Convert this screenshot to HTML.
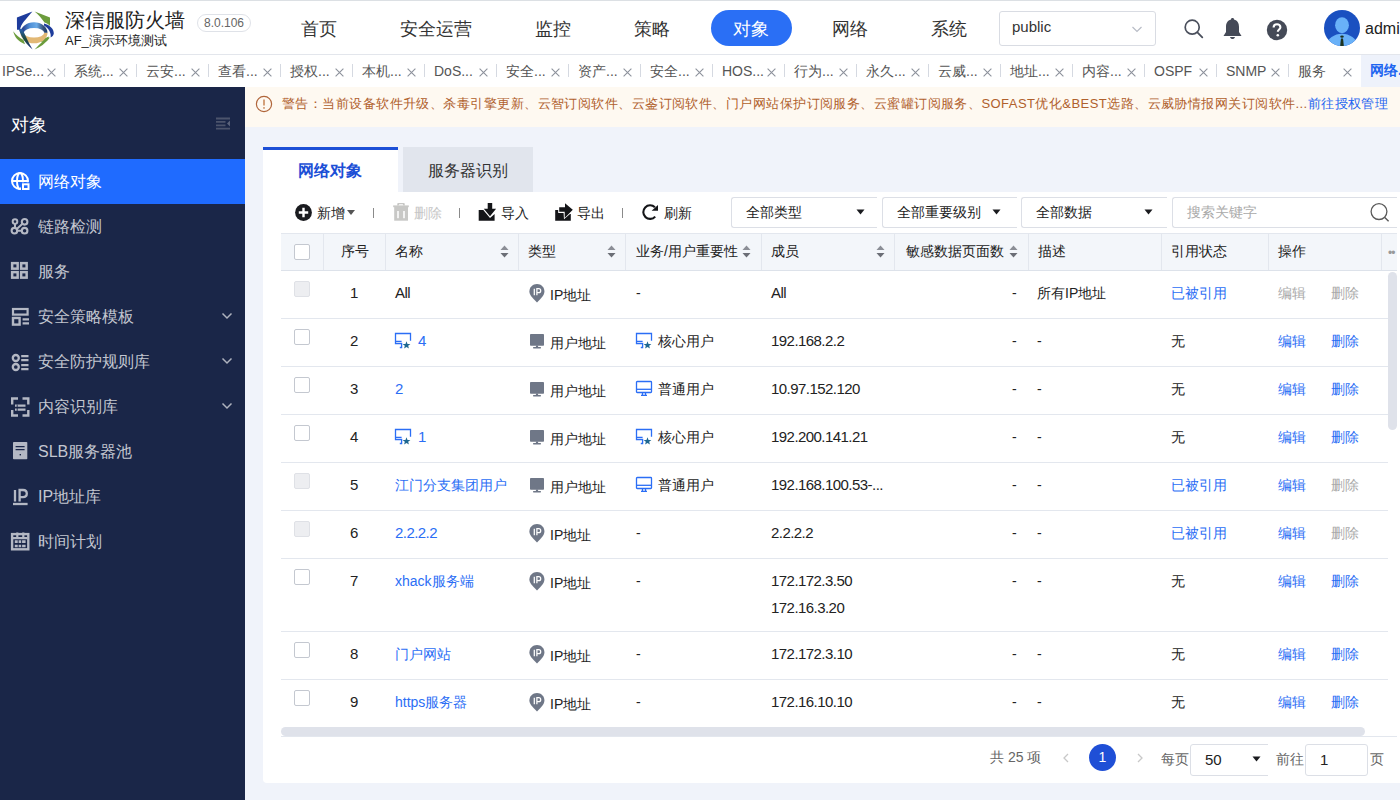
<!DOCTYPE html>
<html><head><meta charset="utf-8">
<style>
*{box-sizing:border-box;margin:0;padding:0}
html,body{width:1400px;height:800px;overflow:hidden;background:#f0f3fa;font-family:"Liberation Sans",sans-serif;color:#333}
.abs{position:absolute}
#hdr{position:absolute;left:0;top:0;width:1400px;height:55px;background:#fff;border-top:1px solid #dce0e4;border-bottom:1px solid #e3e6ec}
#tabs{position:absolute;left:0;top:55px;width:1400px;height:32px;background:#fff;overflow:hidden}
#side{position:absolute;left:0;top:87px;width:245px;height:713px;background:#1a2648}
#main{position:absolute;left:245px;top:87px;width:1155px;height:713px;background:#f0f3fa;overflow:hidden}
.nav{position:absolute;top:16px;font-size:18px;color:#333;line-height:22px;white-space:nowrap}
.tab{position:absolute;top:0;height:32px;width:72px;font-size:14px;color:#555;line-height:31px;white-space:nowrap}
.tab .sep{position:absolute;left:0;top:9px;width:1px;height:13px;background:#d5d9e1}
.tab .t{position:absolute;left:10px;top:1px}
.tab .x{position:absolute;left:55px;top:13px}
.mi{position:absolute;left:0;width:245px;height:45px;font-size:16px;color:#c3c6d0;line-height:45px}
.mi .tx{position:absolute;left:38px;top:0}
.mi svg{position:absolute;left:11px;top:13px}
.mi .chev{position:absolute;left:221px;top:18px}
.tbt{top:203px;font-size:14px;line-height:20px;color:#222;white-space:nowrap}
.sel{top:197px;height:31px;border:1px solid #dcdfe6;border-radius:3px;background:#fff;font-size:14px;line-height:29px;color:#222;white-space:nowrap}
.cb{width:16px;height:16px;border:1px solid #c4c8d0;border-radius:2px;background:#fff}
.cb.dis{background:#edeef1;border-color:#dfe1e6}
.th{top:240px;font-size:14px;line-height:22px;color:#222;white-space:nowrap}
.td{font-size:14px;line-height:22px;color:#222;white-space:nowrap}
.td.num{font-size:15px;letter-spacing:-0.55px}
</style></head><body>
<div id="hdr">
<div id="hdrin" style="position:absolute;left:0;top:1px;width:1400px;height:52px">
<svg class="abs" style="left:0;top:0" width="60" height="54" viewBox="0 0 60 54">
<defs><linearGradient id="bandg" x1="0" x2="1" y1="0" y2="0"><stop offset="0" stop-color="#1b2a7a"/><stop offset="0.35" stop-color="#4f8fd6"/><stop offset="0.6" stop-color="#6aaae6"/><stop offset="0.85" stop-color="#35507a"/><stop offset="1" stop-color="#1a3a6a"/></linearGradient>
<linearGradient id="diag" x1="0" x2="0" y1="0" y2="1"><stop offset="0" stop-color="#2a5fb0"/><stop offset="0.5" stop-color="#1f4a3a"/><stop offset="1" stop-color="#1c2f8a"/></linearGradient></defs>
<path d="M16.9 15.4 L32.4 9.4 L23.5 20 C21.5 22.5 20.5 25 20 27.8 L17 27.8 Z" fill="#1e3c9c"/>
<path d="M34.6 9.4 L50 15.4 L50 24 C48.5 22.5 46.5 21.2 44.5 20.6 C42 16.5 38.5 12.5 34.6 9.4 Z" fill="#6c9c3c"/>
<path d="M13.3 29.3 C14.2 34.5 18 39.5 25 42.3 L23.5 38 C19.5 36 16 33 13.3 29.3 Z" fill="#6c9c3c"/>
<path d="M34.6 47.4 C40 45 45.5 41.5 49.8 35.4 L47.5 35.6 C44 38 40 42 34.6 47.4 Z" fill="#6c9c3c"/>
<path d="M38.5 37.8 C42 37 46 36 49 34.5 L47 39 C44 40 41 40.5 38.5 37.8 Z" fill="#6c9c3c"/>
<path d="M20.5 30.8 A13.5 10.5 0 0 0 47.5 30.8 Z" fill="#e2b874"/>
<path d="M20.5 30.8 A13.5 10.5 0 0 1 47.5 30.8 Z" fill="url(#bandg)"/>
<ellipse cx="34" cy="30.8" rx="10.2" ry="4.8" fill="#fff"/>
<path d="M44 21.4 C50 23 54 27 53.8 31.5 C53.6 33.2 52.2 34.8 50.6 35.6 C51.4 31.5 49 26.5 44 23.6 Z" fill="#1e3c9c"/>
<path d="M18.6 27 L22.2 26.8 C25 33 28.5 40.5 32.6 47.6 C28 43.5 24 39 21.5 34 Z" fill="url(#diag)"/>
</svg>
<div class="abs" style="left:65px;top:5px;font-size:20px;line-height:26px;color:#222;white-space:nowrap">深信服防火墙</div>
<div class="abs" style="left:65px;top:30px;font-size:13px;line-height:18px;color:#222;white-space:nowrap">AF_演示环境测试</div>
<div class="abs" style="left:197px;top:12px;width:54px;height:18px;border:1px solid #dfe2e8;border-radius:9px;font-size:12px;line-height:16px;color:#666;text-align:center">8.0.106</div>
<div class="nav" style="left:301px">首页</div>
<div class="nav" style="left:400px">安全运营</div>
<div class="nav" style="left:535px">监控</div>
<div class="nav" style="left:634px">策略</div>
<div class="abs" style="left:711px;top:8px;width:81px;height:36px;border-radius:18px;background:#2a6ff5"></div>
<div class="nav" style="left:733px;color:#fff">对象</div>
<div class="nav" style="left:832px">网络</div>
<div class="nav" style="left:931px">系统</div>
<div class="abs" style="left:999px;top:9px;width:157px;height:35px;border:1px solid #d9dce3;border-radius:3px;font-size:15px;line-height:29px;color:#333;padding-left:12px">public</div>
<svg class="abs" style="left:1131px;top:23px" width="12" height="8" viewBox="0 0 12 8"><path d="M1.5 2 L6 6.5 L10.5 2" fill="none" stroke="#b8bcc6" stroke-width="1.2"/></svg>
<svg class="abs" style="left:1182px;top:14px" width="24" height="24" viewBox="0 0 24 24"><circle cx="10.2" cy="11.2" r="7" fill="none" stroke="#4a4f5c" stroke-width="1.7"/><path d="M15.4 16.4 L20.3 21.3" stroke="#4a4f5c" stroke-width="1.8" stroke-linecap="round"/></svg>
<svg class="abs" style="left:1222px;top:14px" width="21" height="24" viewBox="0 0 21 24"><path d="M10.5 2 C11.5 2 12 2.6 12 3.4 C15.5 4.3 17 7 17 11 L17 16 L19.5 20 L1.5 20 L4 16 L4 11 C4 7 5.5 4.3 9 3.4 C9 2.6 9.5 2 10.5 2 Z" fill="#454a57"/><path d="M8 21 C8.5 22.5 9.5 23 10.5 23 C11.5 23 12.5 22.5 13 21 Z" fill="#454a57"/></svg>
<svg class="abs" style="left:1266px;top:17px" width="22" height="22" viewBox="0 0 22 22"><circle cx="11" cy="11" r="10.2" fill="#454a57"/><path d="M7.6 8.4 C7.6 6.3 9.1 5.2 11 5.2 C12.9 5.2 14.4 6.4 14.4 8.2 C14.4 10.4 11.8 10.6 11.8 12.8" fill="none" stroke="#fff" stroke-width="2.1"/><circle cx="11.8" cy="16.2" r="1.3" fill="#fff"/></svg>
<svg class="abs" style="left:1323px;top:7px" width="38" height="38" viewBox="0 0 38 38"><defs><clipPath id="av"><circle cx="19" cy="19" r="18"/></clipPath></defs><circle cx="19" cy="19" r="18" fill="#1a50c0"/><g clip-path="url(#av)"><ellipse cx="19" cy="16.2" rx="6.9" ry="8" fill="#69b1f8"/><path d="M2 38 C4 30 11 24.8 19 24.8 C27 24.8 34 30 36 38 Z" fill="#69b1f8"/><ellipse cx="19" cy="27.6" rx="1.8" ry="1.2" fill="#1d3320"/><path d="M18 29.5 H20 L21 38 H17 Z" fill="#1d3320"/></g></svg>
<div class="abs" style="left:1365px;top:17px;font-size:16px;line-height:20px;color:#222">admin</div>
</div>
</div>
<div id="tabs">
<div class="tab" style="left:-8px"><span class="t">IPSe...</span><svg class="x" width="9" height="9" viewBox="0 0 9 9"><path d="M0.6 0.6 L8.4 8.4 M8.4 0.6 L0.6 8.4" stroke="#8d929c" stroke-width="1.1"/></svg></div>
<div class="tab" style="left:64px"><div class="sep"></div><span class="t">系统...</span><svg class="x" width="9" height="9" viewBox="0 0 9 9"><path d="M0.6 0.6 L8.4 8.4 M8.4 0.6 L0.6 8.4" stroke="#8d929c" stroke-width="1.1"/></svg></div>
<div class="tab" style="left:136px"><div class="sep"></div><span class="t">云安...</span><svg class="x" width="9" height="9" viewBox="0 0 9 9"><path d="M0.6 0.6 L8.4 8.4 M8.4 0.6 L0.6 8.4" stroke="#8d929c" stroke-width="1.1"/></svg></div>
<div class="tab" style="left:208px"><div class="sep"></div><span class="t">查看...</span><svg class="x" width="9" height="9" viewBox="0 0 9 9"><path d="M0.6 0.6 L8.4 8.4 M8.4 0.6 L0.6 8.4" stroke="#8d929c" stroke-width="1.1"/></svg></div>
<div class="tab" style="left:280px"><div class="sep"></div><span class="t">授权...</span><svg class="x" width="9" height="9" viewBox="0 0 9 9"><path d="M0.6 0.6 L8.4 8.4 M8.4 0.6 L0.6 8.4" stroke="#8d929c" stroke-width="1.1"/></svg></div>
<div class="tab" style="left:352px"><div class="sep"></div><span class="t">本机...</span><svg class="x" width="9" height="9" viewBox="0 0 9 9"><path d="M0.6 0.6 L8.4 8.4 M8.4 0.6 L0.6 8.4" stroke="#8d929c" stroke-width="1.1"/></svg></div>
<div class="tab" style="left:424px"><div class="sep"></div><span class="t">DoS...</span><svg class="x" width="9" height="9" viewBox="0 0 9 9"><path d="M0.6 0.6 L8.4 8.4 M8.4 0.6 L0.6 8.4" stroke="#8d929c" stroke-width="1.1"/></svg></div>
<div class="tab" style="left:496px"><div class="sep"></div><span class="t">安全...</span><svg class="x" width="9" height="9" viewBox="0 0 9 9"><path d="M0.6 0.6 L8.4 8.4 M8.4 0.6 L0.6 8.4" stroke="#8d929c" stroke-width="1.1"/></svg></div>
<div class="tab" style="left:568px"><div class="sep"></div><span class="t">资产...</span><svg class="x" width="9" height="9" viewBox="0 0 9 9"><path d="M0.6 0.6 L8.4 8.4 M8.4 0.6 L0.6 8.4" stroke="#8d929c" stroke-width="1.1"/></svg></div>
<div class="tab" style="left:640px"><div class="sep"></div><span class="t">安全...</span><svg class="x" width="9" height="9" viewBox="0 0 9 9"><path d="M0.6 0.6 L8.4 8.4 M8.4 0.6 L0.6 8.4" stroke="#8d929c" stroke-width="1.1"/></svg></div>
<div class="tab" style="left:712px"><div class="sep"></div><span class="t">HOS...</span><svg class="x" width="9" height="9" viewBox="0 0 9 9"><path d="M0.6 0.6 L8.4 8.4 M8.4 0.6 L0.6 8.4" stroke="#8d929c" stroke-width="1.1"/></svg></div>
<div class="tab" style="left:784px"><div class="sep"></div><span class="t">行为...</span><svg class="x" width="9" height="9" viewBox="0 0 9 9"><path d="M0.6 0.6 L8.4 8.4 M8.4 0.6 L0.6 8.4" stroke="#8d929c" stroke-width="1.1"/></svg></div>
<div class="tab" style="left:856px"><div class="sep"></div><span class="t">永久...</span><svg class="x" width="9" height="9" viewBox="0 0 9 9"><path d="M0.6 0.6 L8.4 8.4 M8.4 0.6 L0.6 8.4" stroke="#8d929c" stroke-width="1.1"/></svg></div>
<div class="tab" style="left:928px"><div class="sep"></div><span class="t">云威...</span><svg class="x" width="9" height="9" viewBox="0 0 9 9"><path d="M0.6 0.6 L8.4 8.4 M8.4 0.6 L0.6 8.4" stroke="#8d929c" stroke-width="1.1"/></svg></div>
<div class="tab" style="left:1000px"><div class="sep"></div><span class="t">地址...</span><svg class="x" width="9" height="9" viewBox="0 0 9 9"><path d="M0.6 0.6 L8.4 8.4 M8.4 0.6 L0.6 8.4" stroke="#8d929c" stroke-width="1.1"/></svg></div>
<div class="tab" style="left:1072px"><div class="sep"></div><span class="t">内容...</span><svg class="x" width="9" height="9" viewBox="0 0 9 9"><path d="M0.6 0.6 L8.4 8.4 M8.4 0.6 L0.6 8.4" stroke="#8d929c" stroke-width="1.1"/></svg></div>
<div class="tab" style="left:1144px"><div class="sep"></div><span class="t">OSPF</span><svg class="x" width="9" height="9" viewBox="0 0 9 9"><path d="M0.6 0.6 L8.4 8.4 M8.4 0.6 L0.6 8.4" stroke="#8d929c" stroke-width="1.1"/></svg></div>
<div class="tab" style="left:1216px"><div class="sep"></div><span class="t">SNMP</span><svg class="x" width="9" height="9" viewBox="0 0 9 9"><path d="M0.6 0.6 L8.4 8.4 M8.4 0.6 L0.6 8.4" stroke="#8d929c" stroke-width="1.1"/></svg></div>
<div class="tab" style="left:1288px"><div class="sep"></div><span class="t">服务</span><svg class="x" width="9" height="9" viewBox="0 0 9 9"><path d="M0.6 0.6 L8.4 8.4 M8.4 0.6 L0.6 8.4" stroke="#8d929c" stroke-width="1.1"/></svg></div>
<div class="abs" style="left:1361px;top:0;width:40px;height:32px;background:#eef2fb"></div><div class="abs" style="left:1370px;top:0;font-size:14px;line-height:31px;color:#1f66f0;font-weight:bold;white-space:nowrap">网络...</div>
</div>
<div id="side">
<div class="abs" style="left:11px;top:26px;font-size:18px;line-height:24px;color:#fff">对象</div>
<svg class="abs" style="left:215px;top:30px" width="16" height="13" viewBox="0 0 16 13"><path d="M1 1.5 H15 M1 4.9 H10.5 M1 8.3 H10.5 M1 11.6 H15" stroke="#4c546c" stroke-width="1.8"/><path d="M15 3.5 V9.6 L12 6.55 Z" fill="#5a627a"/></svg>
<div class="mi" style="top:72px;background:#1f6bff;color:#fff;"><svg width="24" height="24" viewBox="0 0 24 24" style="left:8px;top:10px"><circle cx="12" cy="12" r="8" fill="none" stroke="#fff" stroke-width="2"/><path d="M4 12 H20" stroke="#fff" stroke-width="2"/><ellipse cx="12" cy="12" rx="3" ry="8" fill="none" stroke="#fff" stroke-width="1.9"/><rect x="13" y="13.3" width="9.5" height="9" fill="#1f6bff"/><rect x="15" y="15.3" width="5.5" height="4.7" fill="none" stroke="#fff" stroke-width="2"/></svg><span class="tx">网络对象</span></div>
<div class="mi" style="top:117px;"><svg width="24" height="24" viewBox="0 0 24 24" style="left:8px;top:10px"><path d="M7 8 V16.7 L16.6 7.8 M6.5 16.7 H16.6" fill="none" stroke="#b4b8c4" stroke-width="2"/><circle cx="7" cy="7.6" r="2.3" fill="#1a2648" stroke="#b4b8c4" stroke-width="2"/><circle cx="16.6" cy="7.8" r="2.8" fill="#1a2648" stroke="#b4b8c4" stroke-width="2.1"/><circle cx="6.4" cy="16.7" r="2.8" fill="#1a2648" stroke="#b4b8c4" stroke-width="2.1"/><circle cx="16.6" cy="16.7" r="2.8" fill="#1a2648" stroke="#b4b8c4" stroke-width="2.1"/></svg><span class="tx">链路检测</span></div>
<div class="mi" style="top:162px;"><svg width="24" height="24" viewBox="0 0 24 24" style="left:8px;top:10px"><rect x="4.15" y="4.15" width="5.5" height="5.5" fill="none" stroke="#b4b8c4" stroke-width="2.5"/><rect x="13.15" y="4.15" width="5.5" height="5.5" fill="none" stroke="#b4b8c4" stroke-width="2.5"/><rect x="4.15" y="13.15" width="5.5" height="5.5" fill="none" stroke="#b4b8c4" stroke-width="2.5"/><rect x="13.15" y="13.15" width="5.5" height="5.5" fill="none" stroke="#b4b8c4" stroke-width="2.5"/></svg><span class="tx">服务</span></div>
<div class="mi" style="top:207px;"><svg width="24" height="24" viewBox="0 0 24 24" style="left:8px;top:10px"><rect x="5" y="5" width="14.6" height="5.6" fill="none" stroke="#b4b8c4" stroke-width="2.2"/><rect x="5" y="14" width="6.6" height="6.6" fill="none" stroke="#b4b8c4" stroke-width="2.4"/><path d="M14.6 15.3 H21 M14.6 19.3 H21" stroke="#b4b8c4" stroke-width="2.3"/></svg><span class="tx">安全策略模板</span><svg class="chev" width="12" height="8" viewBox="0 0 12 8"><path d="M1.5 1.5 L6 6 L10.5 1.5" fill="none" stroke="#aeb2be" stroke-width="1.5"/></svg></div>
<div class="mi" style="top:252px;"><svg width="24" height="24" viewBox="0 0 24 24" style="left:8px;top:10px"><circle cx="7.8" cy="9" r="3" fill="none" stroke="#b4b8c4" stroke-width="2.3"/><circle cx="7.8" cy="18" r="3" fill="none" stroke="#b4b8c4" stroke-width="2.3"/><path d="M13.2 7.2 H20.5 M13.2 11.2 H20.5 M13.2 16.2 H20.5 M13.2 20.2 H20.5" stroke="#b4b8c4" stroke-width="2.2"/></svg><span class="tx">安全防护规则库</span><svg class="chev" width="12" height="8" viewBox="0 0 12 8"><path d="M1.5 1.5 L6 6 L10.5 1.5" fill="none" stroke="#aeb2be" stroke-width="1.5"/></svg></div>
<div class="mi" style="top:297px;"><svg width="24" height="24" viewBox="0 0 24 24" style="left:8px;top:10px"><path d="M10 4.5 H4.2 V10.5 M14.5 4.5 H20.3 V10.5 M4.2 16 V21.5 H10 M20.3 16 V21.5 H14.5" fill="none" stroke="#b4b8c4" stroke-width="2.4"/><path d="M7 11.6 H17.5 M7 15.6 H17.5" stroke="#b4b8c4" stroke-width="2.2"/><path d="M9.2 10.5 V17" stroke="#1a2648" stroke-width="0.9"/></svg><span class="tx">内容识别库</span><svg class="chev" width="12" height="8" viewBox="0 0 12 8"><path d="M1.5 1.5 L6 6 L10.5 1.5" fill="none" stroke="#aeb2be" stroke-width="1.5"/></svg></div>
<div class="mi" style="top:342px;"><svg width="24" height="24" viewBox="0 0 24 24" style="left:8px;top:10px"><rect x="5" y="3" width="14.3" height="17.2" fill="#b4b8c4" rx="0.8"/><path d="M7.6 7.6 H16.6 M7.6 10.6 H16.6" stroke="#1a2648" stroke-width="1.3"/><rect x="11.6" y="15" width="1.4" height="1.4" fill="#1a2648"/></svg><span class="tx">SLB服务器池</span></div>
<div class="mi" style="top:387px;"><svg width="24" height="24" viewBox="0 0 24 24" style="left:8px;top:10px"><path d="M7 6 V17.6 M11.6 17.6 V6 H15 C17.6 6 18.8 7.4 18.8 9.6 C18.8 11.8 17.6 13.2 15 13.2 H11.6" fill="none" stroke="#b4b8c4" stroke-width="2.3"/><path d="M5 20 H19.6" stroke="#b4b8c4" stroke-width="2.3"/></svg><span class="tx">IP地址库</span></div>
<div class="mi" style="top:432px;"><svg width="24" height="24" viewBox="0 0 24 24" style="left:8px;top:10px"><rect x="4.1" y="5.1" width="16.2" height="15.2" fill="none" stroke="#b4b8c4" stroke-width="2.4"/><path d="M5 9.2 H19.5 M9.3 3.6 V8.8 M15.3 3.6 V8.8" stroke="#b4b8c4" stroke-width="2.2"/><path d="M6.8 12.6 H17.6 M6.8 17 H17.6" stroke="#b4b8c4" stroke-width="2.6"/><path d="M10.2 11 V18.6 M13.6 11 V18.6" stroke="#1a2648" stroke-width="0.9"/></svg><span class="tx">时间计划</span></div>
</div>
<div id="main"></div>
<div class="abs" style="left:245px;top:87px;width:1155px;height:40px;background:#fef9f1"></div>
<svg class="abs" style="left:255px;top:95px" width="18" height="18" viewBox="0 0 18 18"><circle cx="9" cy="9" r="7.6" fill="none" stroke="#b0653a" stroke-width="1.2"/><path d="M9 4.6 V10.4" stroke="#c98a5c" stroke-width="1.6"/><circle cx="9" cy="12.9" r="0.9" fill="#c98a5c"/></svg>
<div class="abs warn" style="left:282px;top:95px;font-size:13px;line-height:18px;color:#b0602c;white-space:nowrap;letter-spacing:0.45px">警告：当前设备软件升级、杀毒引擎更新、云智订阅软件、云鉴订阅软件、门户网站保护订阅服务、云蜜罐订阅服务、SOFAST优化&amp;BEST选路、云威胁情报网关订阅软件...<span style="color:#1f66f0">前往授权管理</span></div>
<div class="abs" style="left:263px;top:147px;width:135px;height:45px;background:#fff;border-top:3px solid #1c4fd6"></div>
<div class="abs" style="left:298px;top:160px;font-size:16px;line-height:22px;color:#1c4fd6;font-weight:bold;white-space:nowrap">网络对象</div>
<div class="abs" style="left:403px;top:147px;width:130px;height:45px;background:#e1e5ed"></div>
<div class="abs" style="left:428px;top:160px;font-size:16px;line-height:22px;color:#333;white-space:nowrap">服务器识别</div>
<div class="abs" style="left:263px;top:192px;width:1160px;height:591px;background:#fff;border-radius:0 0 4px 4px"></div>
<!--TOOLBAR-->
<svg class="abs" style="left:294px;top:203px" width="19" height="19" viewBox="0 0 19 19"><circle cx="9.5" cy="9.5" r="8.4" fill="#1a1b1f"/><path d="M9.5 4.8 V14.2 M4.8 9.5 H14.2" stroke="#fff" stroke-width="2.4"/></svg>
<div class="abs tbt" style="left:317px">新增</div>
<svg class="abs" style="left:346px;top:209px" width="10" height="7" viewBox="0 0 10 7"><path d="M1 1 H9 L5 6 Z" fill="#555"/></svg>
<div class="abs" style="left:373px;top:208px;width:1px;height:10px;background:#8a8a8a"></div>
<svg class="abs" style="left:390px;top:200px" width="24" height="24" viewBox="0 0 24 24"><path d="M7 5.6 L7.6 3 H14.4 L15 5.6 H13.2 L12.8 4.2 H9.2 L8.8 5.6 Z" fill="#c8c8c6"/><rect x="3.2" y="5.4" width="15.6" height="1.8" fill="#c8c8c6"/><rect x="4.2" y="7" width="13.8" height="13.7" fill="#c8c8c6"/><rect x="7" y="11" width="2" height="7.2" fill="#f2f2f2"/><rect x="13" y="11" width="2" height="7.2" fill="#f2f2f2"/></svg>
<div class="abs tbt" style="left:414px;color:#c6c6c6">删除</div>
<div class="abs" style="left:459px;top:208px;width:1px;height:10px;background:#8a8a8a"></div>
<svg class="abs" style="left:476px;top:200px" width="24" height="24" viewBox="0 0 24 24"><path d="M2.7 10 H7.3 L14 17.9 L18.6 13.9 V20.7 H2.7 Z" fill="#141518"/><path d="M11.7 3 H16.2 V8.7 H20.1 L14 16.3 L7.8 8.7 H11.7 Z" fill="#141518"/></svg>
<div class="abs tbt" style="left:501px">导入</div>
<svg class="abs" style="left:552px;top:200px" width="24" height="24" viewBox="0 0 24 24"><path d="M3.2 9.9 H6.2 V13 H11.6 L12 19.2 L18 13.9 H18.8 V20.7 H3.2 Z" fill="#141518"/><path d="M7.2 7.2 H13 V3.3 L20.8 9.8 L12.7 18 V11.7 H7.2 Z" fill="#141518"/></svg>
<div class="abs tbt" style="left:577px">导出</div>
<div class="abs" style="left:622px;top:208px;width:1px;height:10px;background:#8a8a8a"></div>
<svg class="abs" style="left:638px;top:200px" width="24" height="24" viewBox="0 0 24 24"><path d="M16.9 7.3 A6.8 6.8 0 1 0 17.2 16.6" fill="none" stroke="#141518" stroke-width="2.1"/><path d="M20 5 V10.8 H13.6 Z" fill="#141518"/></svg>
<div class="abs tbt" style="left:664px">刷新</div>
<div class="abs sel" style="left:731px;width:146px;border-right:none;border-radius:3px 0 0 3px"><span style="position:absolute;left:14px;top:0">全部类型</span></div>
<svg class="abs" style="left:856px;top:209px" width="9" height="6" viewBox="0 0 9 6"><path d="M0.5 0.5 H8.5 L4.5 5.5 Z" fill="#1a1b1f"/></svg>
<div class="abs sel" style="left:882px;width:135px;border-right:none;border-radius:3px 0 0 3px"><span style="position:absolute;left:14px;top:0">全部重要级别</span></div>
<svg class="abs" style="left:992px;top:209px" width="9" height="6" viewBox="0 0 9 6"><path d="M0.5 0.5 H8.5 L4.5 5.5 Z" fill="#1a1b1f"/></svg>
<div class="abs sel" style="left:1021px;width:146px;border-right:none;border-radius:3px 0 0 3px"><span style="position:absolute;left:14px;top:0">全部数据</span></div>
<svg class="abs" style="left:1144px;top:209px" width="9" height="6" viewBox="0 0 9 6"><path d="M0.5 0.5 H8.5 L4.5 5.5 Z" fill="#1a1b1f"/></svg>
<div class="abs sel" style="left:1172px;width:225px;color:#aaa;border-right:none;border-radius:3px 0 0 3px"><span style="position:absolute;left:14px;top:0">搜索关键字</span></div>
<svg class="abs" style="left:1369px;top:202px" width="22" height="22" viewBox="0 0 22 22"><circle cx="10" cy="9.6" r="7.9" fill="none" stroke="#5a5a5a" stroke-width="1.3"/><path d="M15.8 15.4 L19.6 19.2" stroke="#5a5a5a" stroke-width="1.4"/></svg>
<!--/TOOLBAR-->
<!--TABLE-->
<div class="abs" style="left:281px;top:233px;width:1116px;height:38px;background:#f3f6fa;border-top:1px solid #e3e7ee;border-bottom:1px solid #dde2ea"></div>
<div class="abs" style="left:323px;top:233px;width:1px;height:37px;background:#e3e7ee"></div>
<div class="abs" style="left:385px;top:233px;width:1px;height:37px;background:#e3e7ee"></div>
<div class="abs" style="left:518px;top:233px;width:1px;height:37px;background:#e3e7ee"></div>
<div class="abs" style="left:625px;top:233px;width:1px;height:37px;background:#e3e7ee"></div>
<div class="abs" style="left:761px;top:233px;width:1px;height:37px;background:#e3e7ee"></div>
<div class="abs" style="left:894px;top:233px;width:1px;height:37px;background:#e3e7ee"></div>
<div class="abs" style="left:1028px;top:233px;width:1px;height:37px;background:#e3e7ee"></div>
<div class="abs" style="left:1161px;top:233px;width:1px;height:37px;background:#e3e7ee"></div>
<div class="abs" style="left:1268px;top:233px;width:1px;height:37px;background:#e3e7ee"></div>
<div class="abs" style="left:1381px;top:233px;width:1px;height:37px;background:#e3e7ee"></div>
<div class="abs cb" style="left:294px;top:244px"></div>
<div class="abs th" style="left:341px">序号</div>
<div class="abs th" style="left:395px">名称</div>
<div class="abs th" style="left:528px">类型</div>
<div class="abs th" style="left:636px">业务/用户重要性</div>
<div class="abs th" style="left:771px">成员</div>
<div class="abs th" style="left:906px">敏感数据页面数</div>
<div class="abs th" style="left:1038px">描述</div>
<div class="abs th" style="left:1171px">引用状态</div>
<div class="abs th" style="left:1278px">操作</div>
<div class="abs" style="left:500px;top:244px"><svg width="9" height="13" viewBox="0 0 9 13"><path d="M4.5 0.5 L8.5 5 H0.5 Z" fill="#8b8e96"/><path d="M4.5 12.5 L8.5 8 H0.5 Z" fill="#6b6e76"/></svg></div>
<div class="abs" style="left:607px;top:244px"><svg width="9" height="13" viewBox="0 0 9 13"><path d="M4.5 0.5 L8.5 5 H0.5 Z" fill="#8b8e96"/><path d="M4.5 12.5 L8.5 8 H0.5 Z" fill="#6b6e76"/></svg></div>
<div class="abs" style="left:742px;top:244px"><svg width="9" height="13" viewBox="0 0 9 13"><path d="M4.5 0.5 L8.5 5 H0.5 Z" fill="#8b8e96"/><path d="M4.5 12.5 L8.5 8 H0.5 Z" fill="#6b6e76"/></svg></div>
<div class="abs" style="left:876px;top:244px"><svg width="9" height="13" viewBox="0 0 9 13"><path d="M4.5 0.5 L8.5 5 H0.5 Z" fill="#8b8e96"/><path d="M4.5 12.5 L8.5 8 H0.5 Z" fill="#6b6e76"/></svg></div>
<div class="abs" style="left:1009px;top:244px"><svg width="9" height="13" viewBox="0 0 9 13"><path d="M4.5 0.5 L8.5 5 H0.5 Z" fill="#8b8e96"/><path d="M4.5 12.5 L8.5 8 H0.5 Z" fill="#6b6e76"/></svg></div>
<div class="abs" style="left:1388px;top:249px;font-size:12px;color:#999;line-height:8px;letter-spacing:-1px">••</div>
<div class="abs" style="left:281px;top:318px;width:1107px;height:1px;background:#e3e7ee"></div>
<div class="abs cb dis" style="left:294px;top:281px"></div>
<div class="abs td num" style="left:323px;width:62px;text-align:center;top:282px">1</div>
<div class="abs td num" style="left:395px;top:282px;color:#222">All</div>
<div class="abs" style="left:529px;top:284px"><svg width="16" height="20" viewBox="0 0 16 20"><path d="M8 0 C12.3 0 15.4 3.3 15.4 7.6 C15.4 11 12.8 14 8 18.4 C3.2 14 0.4 11 0.4 7.6 C0.4 3.3 3.7 0 8 0 Z" fill="#6f7787"/><path d="M5.3 4.7 V11.3 M7.9 11.3 V4.7 H9.7 C11 4.7 11.7 5.5 11.7 6.7 C11.7 7.9 11 8.7 9.7 8.7 H7.9" fill="none" stroke="#fff" stroke-width="1.25"/></svg></div>
<div class="abs td" style="left:550px;top:284px">IP地址</div>
<div class="abs td" style="left:636px;top:282px">-</div>
<div class="abs td num" style="left:771px;top:282px">All</div>
<div class="abs td" style="left:1012px;top:282px">-</div>
<div class="abs td" style="left:1037px;top:282px">所有IP地址</div>
<div class="abs td" style="left:1171px;top:282px;color:#2b6ef5">已被引用</div>
<div class="abs td" style="left:1278px;top:282px;color:#aaa">编辑</div>
<div class="abs td" style="left:1331px;top:282px;color:#aaa">删除</div>
<div class="abs" style="left:281px;top:366px;width:1107px;height:1px;background:#e3e7ee"></div>
<div class="abs cb" style="left:294px;top:329px"></div>
<div class="abs td num" style="left:323px;width:62px;text-align:center;top:330px">2</div>
<div class="abs" style="left:394px;top:331px"><svg width="18" height="18" viewBox="0 0 18 18"><path d="M16.5 9.8 V2.5 H1.5 V12.5 H7.6 V16.5 H5.8 M1.5 10.3 H7.6" fill="none" stroke="#2b6ef5" stroke-width="1.3"/><path d="M12.50 10.20 L13.53 12.88 L16.40 13.03 L14.16 14.84 L14.91 17.62 L12.50 16.05 L10.09 17.62 L10.84 14.84 L8.60 13.03 L11.47 12.88 Z" fill="#1d6791"/></svg></div>
<div class="abs td num" style="left:418px;top:330px;color:#2b6ef5">4</div>
<div class="abs" style="left:529px;top:333px"><svg width="16" height="16" viewBox="0 0 16 16"><rect x="1" y="1" width="14" height="11.8" rx="0.8" fill="#6f7787"/><rect x="6.9" y="12.5" width="2.2" height="2" fill="#6f7787"/><rect x="4" y="14.1" width="8" height="1.3" rx="0.6" fill="#6f7787"/></svg></div>
<div class="abs td" style="left:550px;top:332px">用户地址</div>
<div class="abs" style="left:635px;top:331px"><svg width="18" height="18" viewBox="0 0 18 18"><path d="M16.5 9.8 V2.5 H1.5 V12.5 H7.6 V16.5 H5.8 M1.5 10.3 H7.6" fill="none" stroke="#2b6ef5" stroke-width="1.3"/><path d="M12.50 10.20 L13.53 12.88 L16.40 13.03 L14.16 14.84 L14.91 17.62 L12.50 16.05 L10.09 17.62 L10.84 14.84 L8.60 13.03 L11.47 12.88 Z" fill="#1d6791"/></svg></div>
<div class="abs td" style="left:658px;top:330px">核心用户</div>
<div class="abs td num" style="left:771px;top:330px">192.168.2.2</div>
<div class="abs td" style="left:1012px;top:330px">-</div>
<div class="abs td" style="left:1037px;top:330px">-</div>
<div class="abs td" style="left:1171px;top:330px;color:#222">无</div>
<div class="abs td" style="left:1278px;top:330px;color:#2b6ef5">编辑</div>
<div class="abs td" style="left:1331px;top:330px;color:#2b6ef5">删除</div>
<div class="abs" style="left:281px;top:414px;width:1107px;height:1px;background:#e3e7ee"></div>
<div class="abs cb" style="left:294px;top:377px"></div>
<div class="abs td num" style="left:323px;width:62px;text-align:center;top:378px">3</div>
<div class="abs td num" style="left:395px;top:378px;color:#2b6ef5">2</div>
<div class="abs" style="left:529px;top:381px"><svg width="16" height="16" viewBox="0 0 16 16"><rect x="1" y="1" width="14" height="11.8" rx="0.8" fill="#6f7787"/><rect x="6.9" y="12.5" width="2.2" height="2" fill="#6f7787"/><rect x="4" y="14.1" width="8" height="1.3" rx="0.6" fill="#6f7787"/></svg></div>
<div class="abs td" style="left:550px;top:380px">用户地址</div>
<div class="abs" style="left:635px;top:379px"><svg width="18" height="18" viewBox="0 0 18 18"><rect x="1.5" y="2.5" width="15" height="11" rx="0.8" fill="none" stroke="#2b6ef5" stroke-width="1.3"/><path d="M1.5 10.3 H16.5" stroke="#2b6ef5" stroke-width="1.3"/><path d="M7.5 13.5 V16.4 M10.5 13.5 V16.4 M6 16.4 H12" stroke="#2b6ef5" stroke-width="1.3"/></svg></div>
<div class="abs td" style="left:658px;top:378px">普通用户</div>
<div class="abs td num" style="left:771px;top:378px">10.97.152.120</div>
<div class="abs td" style="left:1012px;top:378px">-</div>
<div class="abs td" style="left:1037px;top:378px">-</div>
<div class="abs td" style="left:1171px;top:378px;color:#222">无</div>
<div class="abs td" style="left:1278px;top:378px;color:#2b6ef5">编辑</div>
<div class="abs td" style="left:1331px;top:378px;color:#2b6ef5">删除</div>
<div class="abs" style="left:281px;top:462px;width:1107px;height:1px;background:#e3e7ee"></div>
<div class="abs cb" style="left:294px;top:425px"></div>
<div class="abs td num" style="left:323px;width:62px;text-align:center;top:426px">4</div>
<div class="abs" style="left:394px;top:427px"><svg width="18" height="18" viewBox="0 0 18 18"><path d="M16.5 9.8 V2.5 H1.5 V12.5 H7.6 V16.5 H5.8 M1.5 10.3 H7.6" fill="none" stroke="#2b6ef5" stroke-width="1.3"/><path d="M12.50 10.20 L13.53 12.88 L16.40 13.03 L14.16 14.84 L14.91 17.62 L12.50 16.05 L10.09 17.62 L10.84 14.84 L8.60 13.03 L11.47 12.88 Z" fill="#1d6791"/></svg></div>
<div class="abs td num" style="left:418px;top:426px;color:#2b6ef5">1</div>
<div class="abs" style="left:529px;top:429px"><svg width="16" height="16" viewBox="0 0 16 16"><rect x="1" y="1" width="14" height="11.8" rx="0.8" fill="#6f7787"/><rect x="6.9" y="12.5" width="2.2" height="2" fill="#6f7787"/><rect x="4" y="14.1" width="8" height="1.3" rx="0.6" fill="#6f7787"/></svg></div>
<div class="abs td" style="left:550px;top:428px">用户地址</div>
<div class="abs" style="left:635px;top:427px"><svg width="18" height="18" viewBox="0 0 18 18"><path d="M16.5 9.8 V2.5 H1.5 V12.5 H7.6 V16.5 H5.8 M1.5 10.3 H7.6" fill="none" stroke="#2b6ef5" stroke-width="1.3"/><path d="M12.50 10.20 L13.53 12.88 L16.40 13.03 L14.16 14.84 L14.91 17.62 L12.50 16.05 L10.09 17.62 L10.84 14.84 L8.60 13.03 L11.47 12.88 Z" fill="#1d6791"/></svg></div>
<div class="abs td" style="left:658px;top:426px">核心用户</div>
<div class="abs td num" style="left:771px;top:426px">192.200.141.21</div>
<div class="abs td" style="left:1012px;top:426px">-</div>
<div class="abs td" style="left:1037px;top:426px">-</div>
<div class="abs td" style="left:1171px;top:426px;color:#222">无</div>
<div class="abs td" style="left:1278px;top:426px;color:#2b6ef5">编辑</div>
<div class="abs td" style="left:1331px;top:426px;color:#2b6ef5">删除</div>
<div class="abs" style="left:281px;top:510px;width:1107px;height:1px;background:#e3e7ee"></div>
<div class="abs cb dis" style="left:294px;top:473px"></div>
<div class="abs td num" style="left:323px;width:62px;text-align:center;top:474px">5</div>
<div class="abs td" style="left:395px;top:474px;color:#2b6ef5">江门分支集团用户</div>
<div class="abs" style="left:529px;top:477px"><svg width="16" height="16" viewBox="0 0 16 16"><rect x="1" y="1" width="14" height="11.8" rx="0.8" fill="#6f7787"/><rect x="6.9" y="12.5" width="2.2" height="2" fill="#6f7787"/><rect x="4" y="14.1" width="8" height="1.3" rx="0.6" fill="#6f7787"/></svg></div>
<div class="abs td" style="left:550px;top:476px">用户地址</div>
<div class="abs" style="left:635px;top:475px"><svg width="18" height="18" viewBox="0 0 18 18"><rect x="1.5" y="2.5" width="15" height="11" rx="0.8" fill="none" stroke="#2b6ef5" stroke-width="1.3"/><path d="M1.5 10.3 H16.5" stroke="#2b6ef5" stroke-width="1.3"/><path d="M7.5 13.5 V16.4 M10.5 13.5 V16.4 M6 16.4 H12" stroke="#2b6ef5" stroke-width="1.3"/></svg></div>
<div class="abs td" style="left:658px;top:474px">普通用户</div>
<div class="abs td num" style="left:771px;top:474px">192.168.100.53-...</div>
<div class="abs td" style="left:1012px;top:474px">-</div>
<div class="abs td" style="left:1037px;top:474px">-</div>
<div class="abs td" style="left:1171px;top:474px;color:#2b6ef5">已被引用</div>
<div class="abs td" style="left:1278px;top:474px;color:#2b6ef5">编辑</div>
<div class="abs td" style="left:1331px;top:474px;color:#aaa">删除</div>
<div class="abs" style="left:281px;top:558px;width:1107px;height:1px;background:#e3e7ee"></div>
<div class="abs cb dis" style="left:294px;top:521px"></div>
<div class="abs td num" style="left:323px;width:62px;text-align:center;top:522px">6</div>
<div class="abs td num" style="left:395px;top:522px;color:#2b6ef5">2.2.2.2</div>
<div class="abs" style="left:529px;top:524px"><svg width="16" height="20" viewBox="0 0 16 20"><path d="M8 0 C12.3 0 15.4 3.3 15.4 7.6 C15.4 11 12.8 14 8 18.4 C3.2 14 0.4 11 0.4 7.6 C0.4 3.3 3.7 0 8 0 Z" fill="#6f7787"/><path d="M5.3 4.7 V11.3 M7.9 11.3 V4.7 H9.7 C11 4.7 11.7 5.5 11.7 6.7 C11.7 7.9 11 8.7 9.7 8.7 H7.9" fill="none" stroke="#fff" stroke-width="1.25"/></svg></div>
<div class="abs td" style="left:550px;top:524px">IP地址</div>
<div class="abs td" style="left:636px;top:522px">-</div>
<div class="abs td num" style="left:771px;top:522px">2.2.2.2</div>
<div class="abs td" style="left:1012px;top:522px">-</div>
<div class="abs td" style="left:1037px;top:522px">-</div>
<div class="abs td" style="left:1171px;top:522px;color:#2b6ef5">已被引用</div>
<div class="abs td" style="left:1278px;top:522px;color:#2b6ef5">编辑</div>
<div class="abs td" style="left:1331px;top:522px;color:#aaa">删除</div>
<div class="abs" style="left:281px;top:631px;width:1107px;height:1px;background:#e3e7ee"></div>
<div class="abs cb" style="left:294px;top:569px"></div>
<div class="abs td num" style="left:323px;width:62px;text-align:center;top:570px">7</div>
<div class="abs td" style="left:395px;top:570px;color:#2b6ef5">xhack服务端</div>
<div class="abs" style="left:529px;top:572px"><svg width="16" height="20" viewBox="0 0 16 20"><path d="M8 0 C12.3 0 15.4 3.3 15.4 7.6 C15.4 11 12.8 14 8 18.4 C3.2 14 0.4 11 0.4 7.6 C0.4 3.3 3.7 0 8 0 Z" fill="#6f7787"/><path d="M5.3 4.7 V11.3 M7.9 11.3 V4.7 H9.7 C11 4.7 11.7 5.5 11.7 6.7 C11.7 7.9 11 8.7 9.7 8.7 H7.9" fill="none" stroke="#fff" stroke-width="1.25"/></svg></div>
<div class="abs td" style="left:550px;top:572px">IP地址</div>
<div class="abs td" style="left:636px;top:570px">-</div>
<div class="abs td num" style="left:771px;top:570px">172.172.3.50</div>
<div class="abs td num" style="left:771px;top:597px">172.16.3.20</div>
<div class="abs td" style="left:1012px;top:570px">-</div>
<div class="abs td" style="left:1037px;top:570px">-</div>
<div class="abs td" style="left:1171px;top:570px;color:#222">无</div>
<div class="abs td" style="left:1278px;top:570px;color:#2b6ef5">编辑</div>
<div class="abs td" style="left:1331px;top:570px;color:#2b6ef5">删除</div>
<div class="abs" style="left:281px;top:679px;width:1107px;height:1px;background:#e3e7ee"></div>
<div class="abs cb" style="left:294px;top:642px"></div>
<div class="abs td num" style="left:323px;width:62px;text-align:center;top:643px">8</div>
<div class="abs td" style="left:395px;top:643px;color:#2b6ef5">门户网站</div>
<div class="abs" style="left:529px;top:645px"><svg width="16" height="20" viewBox="0 0 16 20"><path d="M8 0 C12.3 0 15.4 3.3 15.4 7.6 C15.4 11 12.8 14 8 18.4 C3.2 14 0.4 11 0.4 7.6 C0.4 3.3 3.7 0 8 0 Z" fill="#6f7787"/><path d="M5.3 4.7 V11.3 M7.9 11.3 V4.7 H9.7 C11 4.7 11.7 5.5 11.7 6.7 C11.7 7.9 11 8.7 9.7 8.7 H7.9" fill="none" stroke="#fff" stroke-width="1.25"/></svg></div>
<div class="abs td" style="left:550px;top:645px">IP地址</div>
<div class="abs td" style="left:636px;top:643px">-</div>
<div class="abs td num" style="left:771px;top:643px">172.172.3.10</div>
<div class="abs td" style="left:1012px;top:643px">-</div>
<div class="abs td" style="left:1037px;top:643px">-</div>
<div class="abs td" style="left:1171px;top:643px;color:#222">无</div>
<div class="abs td" style="left:1278px;top:643px;color:#2b6ef5">编辑</div>
<div class="abs td" style="left:1331px;top:643px;color:#2b6ef5">删除</div>
<div class="abs cb" style="left:294px;top:690px"></div>
<div class="abs td num" style="left:323px;width:62px;text-align:center;top:691px">9</div>
<div class="abs td" style="left:395px;top:691px;color:#2b6ef5">https服务器</div>
<div class="abs" style="left:529px;top:693px"><svg width="16" height="20" viewBox="0 0 16 20"><path d="M8 0 C12.3 0 15.4 3.3 15.4 7.6 C15.4 11 12.8 14 8 18.4 C3.2 14 0.4 11 0.4 7.6 C0.4 3.3 3.7 0 8 0 Z" fill="#6f7787"/><path d="M5.3 4.7 V11.3 M7.9 11.3 V4.7 H9.7 C11 4.7 11.7 5.5 11.7 6.7 C11.7 7.9 11 8.7 9.7 8.7 H7.9" fill="none" stroke="#fff" stroke-width="1.25"/></svg></div>
<div class="abs td" style="left:550px;top:693px">IP地址</div>
<div class="abs td" style="left:636px;top:691px">-</div>
<div class="abs td num" style="left:771px;top:691px">172.16.10.10</div>
<div class="abs td" style="left:1012px;top:691px">-</div>
<div class="abs td" style="left:1037px;top:691px">-</div>
<div class="abs td" style="left:1171px;top:691px;color:#222">无</div>
<div class="abs td" style="left:1278px;top:691px;color:#2b6ef5">编辑</div>
<div class="abs td" style="left:1331px;top:691px;color:#2b6ef5">删除</div>
<div class="abs" style="left:281px;top:736px;width:1116px;height:1px;background:#e3e7ee"></div>
<div class="abs" style="left:281px;top:727px;width:1084px;height:9px;background:#dfe2ea;border-radius:5px"></div>
<div class="abs" style="left:1388px;top:272px;width:9px;height:158px;background:#dfe2ea;border-radius:5px"></div>
<!--/TABLE-->
<!--PAGER-->
<div class="abs" style="left:990px;top:747px;font-size:14px;line-height:20px;color:#666;white-space:nowrap">共 25 项</div>
<svg class="abs" style="left:1062px;top:753px" width="8" height="10" viewBox="0 0 8 10"><path d="M6 1 L2 5 L6 9" fill="none" stroke="#c8c8c8" stroke-width="1.3"/></svg>
<div class="abs" style="left:1089px;top:744px;width:27px;height:27px;border-radius:50%;background:#1f4fd6;color:#fff;font-size:14px;line-height:27px;text-align:center">1</div>
<svg class="abs" style="left:1136px;top:753px" width="8" height="10" viewBox="0 0 8 10"><path d="M2 1 L6 5 L2 9" fill="none" stroke="#c8c8c8" stroke-width="1.3"/></svg>
<div class="abs" style="left:1161px;top:749px;font-size:14px;line-height:20px;color:#666;white-space:nowrap">每页</div>
<div class="abs" style="left:1190px;top:744px;width:85px;height:32px;border:1px solid #dcdfe6;border-radius:3px;background:#fff;font-size:15px;line-height:30px;color:#222;padding-left:14px">50</div>
<div class="abs" style="left:1268px;top:744px;width:8px;height:32px;background:#fff"></div>
<svg class="abs" style="left:1252px;top:756px" width="9" height="6" viewBox="0 0 9 6"><path d="M0.5 0.5 H8.5 L4.5 5.5 Z" fill="#1a1b1f"/></svg>
<div class="abs" style="left:1276px;top:749px;font-size:14px;line-height:20px;color:#666;white-space:nowrap">前往</div>
<div class="abs" style="left:1305px;top:744px;width:63px;height:32px;border:1px solid #dcdfe6;border-radius:3px;background:#fff;font-size:15px;line-height:30px;color:#222;padding-left:14px">1</div>
<div class="abs" style="left:1370px;top:749px;font-size:14px;line-height:20px;color:#666;white-space:nowrap">页</div>
<!--/PAGER-->
</body></html>
